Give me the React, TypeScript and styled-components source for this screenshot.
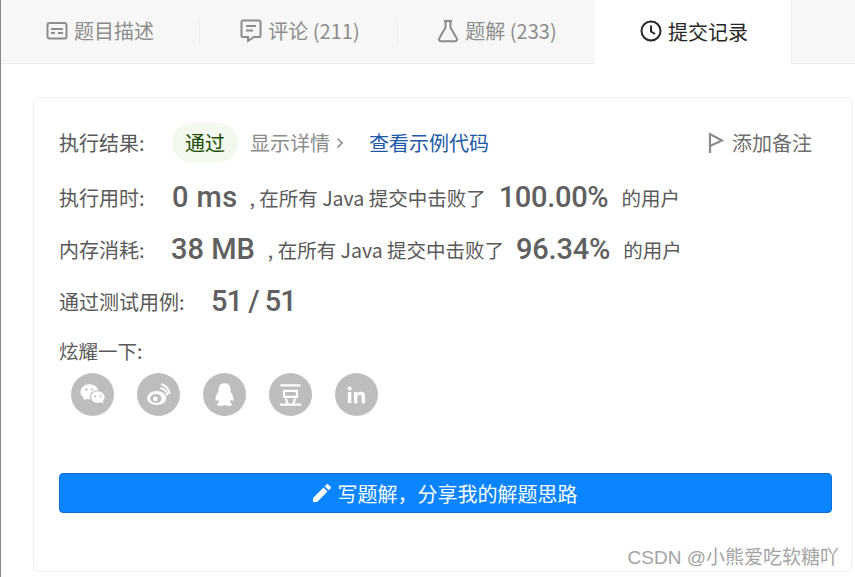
import React from "react"
import styled, { createGlobalStyle } from "styled-components"

const GlobalStyle = createGlobalStyle`
  html, body {
    margin: 0;
    padding: 0;
    background: #fff;
  }
  body {
    font-family: "Noto Sans CJK SC", "Noto Sans", sans-serif;
  }
`

const Page = styled.div`
  width: 855px;
  height: 577px;
  overflow: hidden;
  box-sizing: border-box;
  border-left: 1px solid #8a8a8a;
`

const TabBar = styled.div`
  display: flex;
  height: 64px;
  box-sizing: border-box;
  background: #f7f7f7;
  border-bottom: 1px solid #eeeeee;
`

const Tab = styled.div<{ $active?: boolean; $width: number; $divider?: boolean; $nudge?: number }>`
  position: relative;
  display: flex;
  align-items: center;
  justify-content: center;
  gap: 6px;
  width: ${(p) => p.$width}px;
  height: ${(p) => (p.$active ? 64 : 63)}px;
  padding-bottom: 2px;
  padding-left: ${(p) => Math.max(p.$nudge ?? 0, 0)}px;
  padding-right: ${(p) => Math.max(-(p.$nudge ?? 0), 0)}px;
  box-sizing: border-box;
  font-size: 20px;
  color: ${(p) => (p.$active ? "#262626" : "#8c8c8c")};
  background: ${(p) => (p.$active ? "#fff" : "transparent")};
  ${(p) => p.$active && "border-right: 1px solid #eeeeee;"}
  ${(p) =>
    p.$divider &&
    `&::after {
      content: "";
      position: absolute;
      right: 0;
      top: 19px;
      height: 25px;
      width: 1px;
      background: #eeeeee;
    }`}
`

const Card = styled.div`
  margin: 33px 3px 0 32px;
  height: 475px;
  box-sizing: border-box;
  padding: 25px 19px 0 25px;
  border: 1px solid #f0f0f0;
  border-radius: 6px;
`

const ResultRow = styled.div`
  display: flex;
  align-items: center;
  height: 39px;
  font-size: 20px;
  color: #595959;
`

const Label = styled.span<{ $width: number }>`
  width: ${(p) => p.$width}px;
  flex: none;
  font-size: 20px;
  color: #595959;
`

const PassBadge = styled.span`
  display: flex;
  align-items: center;
  justify-content: center;
  width: 66px;
  height: 39px;
  border-radius: 19px;
  background: #f4f9f0;
  color: #1d4d00;
`

const Details = styled.span`
  display: flex;
  align-items: center;
  gap: 6px;
  margin-left: 12px;
  color: #8c8c8c;
`

const SampleLink = styled.span`
  margin-left: 25px;
  color: #1f5aa8;
`

const Note = styled.span`
  display: flex;
  align-items: center;
  gap: 8px;
  margin-left: auto;
  margin-right: 20px;
  color: #6e6e6e;
`

const StatRow = styled.div<{ $top: number }>`
  display: flex;
  align-items: center;
  height: 40px;
  margin-top: ${(p) => p.$top}px;
  color: #595959;
`

const Big = styled.span<{ $left?: number; $right?: number; $tight?: number }>`
  font-family: "Roboto", "Noto Sans", sans-serif;
  font-size: 29px;
  font-weight: 500;
  color: #606060;
  letter-spacing: ${(p) => p.$tight ?? 0}px;
  margin-left: ${(p) => p.$left ?? 0}px;
  margin-right: ${(p) => p.$right ?? 0}px;
  white-space: pre;
`

const Small = styled.span`
  font-size: 19.5px;
  color: #595959;
  white-space: pre;
`

const ShareLabel = styled.div`
  margin-top: 17px;
  font-size: 19.5px;
  line-height: 26px;
  color: #595959;
`

const ShareIcons = styled.div`
  display: flex;
  gap: 23px;
  margin: 9px 0 0 12px;
`

const ShareIcon = styled.div`
  display: flex;
  align-items: center;
  justify-content: center;
  width: 43px;
  height: 43px;
  border-radius: 50%;
  background: #bdbdbd;
`

const WriteButton = styled.div`
  display: flex;
  align-items: center;
  justify-content: center;
  gap: 7px;
  height: 40px;
  margin-top: 57px;
  padding-right: 1px;
  box-sizing: border-box;
  border: 1px solid #0d6fd6;
  border-radius: 4px;
  background: #0a84ff;
  color: #fff;
  font-size: 20px;
`

const Watermark = styled.div`
  position: absolute;
  right: 16px;
  top: 545px;
  font-family: "Liberation Sans", "Noto Sans CJK SC", sans-serif;
  font-size: 19px;
  line-height: 26px;
  color: #a3a3a3;
  white-space: pre;
`

const DescIcon = () => (
  <svg width="22" height="20" viewBox="0 0 22 20" fill="none" stroke="#8c8c8c" strokeWidth="2">
    <rect x="1.5" y="2" width="19" height="15.5" rx="2" />
    <path d="M5 8h12M5 12h4M12 12h5" />
  </svg>
)

const CommentIcon = () => (
  <svg width="22" height="24" viewBox="0 0 22 24" fill="none" stroke="#8c8c8c" strokeWidth="2">
    <path d="M3 1.5h16a1.5 1.5 0 0 1 1.5 1.5v13.5a1.5 1.5 0 0 1-1.5 1.5h-5l-6 4v-4H3a1.5 1.5 0 0 1-1.5-1.5V3A1.5 1.5 0 0 1 3 1.5z" />
    <path d="M6 7h10M6 11.5h7" />
  </svg>
)

const FlaskIcon = () => (
  <svg width="22" height="24" viewBox="0 0 22 24" fill="none" stroke="#8c8c8c" strokeWidth="2">
    <path d="M7 2h8M8.5 2v6.5L2.2 19.5c-.7 1.3.1 2.7 1.6 2.7h14.4c1.5 0 2.3-1.4 1.6-2.7L13.5 8.5V2" />
  </svg>
)

const ClockIcon = () => (
  <svg width="22" height="22" viewBox="0 0 22 22" fill="none" stroke="#262626" strokeWidth="2">
    <circle cx="11" cy="11" r="9.5" />
    <path d="M11 5.5V11.5l4 2.5" />
  </svg>
)

const ChevronIcon = () => (
  <svg width="8" height="12" viewBox="0 0 8 12" fill="none" stroke="#8c8c8c" strokeWidth="1.6">
    <path d="M1.5 1.5 6 6l-4.5 4.5" />
  </svg>
)

const FlagIcon = () => (
  <svg width="16" height="22" viewBox="0 0 16 22" fill="none" stroke="#8c8c8c" strokeWidth="2.2">
    <path d="M2 21V2l12 6.5L2 14" />
  </svg>
)

const PencilIcon = () => (
  <svg width="18" height="18" viewBox="0 0 18 18" fill="#fff">
    <path d="M0 18v-4L10.5 3.5l4 4L4 18zM11.7 2.3 13.6.4a1.2 1.2 0 0 1 1.7 0l2.3 2.3a1.2 1.2 0 0 1 0 1.7l-1.9 1.9z" />
  </svg>
)

const WechatIcon = () => (
  <svg width="26" height="23" viewBox="0 0 30 26" fill="#fff">
    <ellipse cx="11" cy="10" rx="10.5" ry="8.8" />
    <path d="M5 15l-1 5 5-3z" />
    <ellipse cx="20.5" cy="16" rx="9.5" ry="8" fill="#bdbdbd" />
    <ellipse cx="20.5" cy="16" rx="8" ry="6.8" />
    <path d="M24 21l3 3-.5-5z" />
    <circle cx="7.5" cy="7.5" r="1.3" fill="#bdbdbd" />
    <circle cx="14" cy="7.5" r="1.3" fill="#bdbdbd" />
    <circle cx="17.5" cy="15" r="1.1" fill="#bdbdbd" />
    <circle cx="23.5" cy="15" r="1.1" fill="#bdbdbd" />
  </svg>
)

const WeiboIcon = () => (
  <svg width="25" height="23" viewBox="0 0 28 26">
    <ellipse cx="12" cy="17" rx="11" ry="8" fill="#fff" />
    <ellipse cx="11" cy="17.5" rx="6.5" ry="5" fill="#bdbdbd" />
    <circle cx="10.5" cy="18" r="2.6" fill="#fff" />
    <path d="M16 6a8 8 0 0 1 8 8M17 1.5a12 12 0 0 1 9.5 11" fill="none" stroke="#fff" strokeWidth="2.4" />
  </svg>
)

const QQIcon = () => (
  <svg width="21" height="25" viewBox="0 0 26 30" fill="#fff">
    <path d="M13 1c5.5 0 7.5 4 7.5 9 0 1.2.2 2 1.2 3.6 1.5 2.4 3 5.4 2.3 8.4-.4 1.5-1.4 1-2.5-.8-.5 1.6-1.2 2.8-2 3.6 2 .8 3 1.6 3 2.5 0 1-2 1.7-5 1.7-2 0-3.5-.4-4.5-1.2-1 .8-2.5 1.2-4.5 1.2-3 0-5-.7-5-1.7 0-.9 1-1.7 3-2.5-.8-.8-1.500-2-2-3.600C3.4 23 2.4 23.5 2 22c-.7-3 .8-6 2.300-8.400 1-1.600 1.200-2.400 1.200-3.600C5.500 5 7.500 1 13 1z" />
  </svg>
)

const DoubanIcon = () => (
  <svg width="23" height="24" viewBox="0 0 24 26" fill="none" stroke="#fff" strokeWidth="2.4">
    <path d="M1 2.5h22M5 8.5h14V15H5zM7 17l2 6M17 17l-2 6M.5 23.500h23" />
  </svg>
)

const LinkedinIcon = () => (
  <svg width="19" height="18" viewBox="0 0 22 20" fill="#fff">
    <rect x="1" y="6.5" width="4" height="13" />
    <circle cx="3" cy="2.6" r="2.4" />
    <path d="M8 6.5h3.8v1.9c.7-1.2 2.2-2.2 4.3-2.2 4 0 4.900 2.600 4.900 6v7.300h-4v-6.500c0-1.600-.1-3.400-2.100-3.400s-2.900 1.600-2.900 3.400v6.500H8z" />
  </svg>
)

const App = () => {
  return (
    <Page>
      <GlobalStyle />
      <TabBar>
        <Tab $width={199} $divider $nudge={-1}>
          <DescIcon />
          题目描述
        </Tab>
        <Tab $width={198} $divider $nudge={2}>
          <CommentIcon />
          评论 (211)
        </Tab>
        <Tab $width={197} $nudge={1}>
          <FlaskIcon />
          题解 (233)
        </Tab>
        <Tab $width={197} $active $nudge={2}>
          <ClockIcon />
          提交记录
        </Tab>
      </TabBar>
      <Card>
        <ResultRow>
          <Label $width={113}>执行结果:</Label>
          <PassBadge>通过</PassBadge>
          <Details>
            显示详情
            <ChevronIcon />
          </Details>
          <SampleLink>查看示例代码</SampleLink>
          <Note>
            <FlagIcon />
            添加备注
          </Note>
        </ResultRow>
        <StatRow $top={15}>
          <Label $width={113}>执行用时:</Label>
          <Big $right={12} $tight={0.4}>0 ms</Big>
          <Small>, 在所有 Java 提交中击败了</Small>
          <Big $left={13} $right={13} $tight={-0.3}>100.00%</Big>
          <Small>的用户</Small>
        </StatRow>
        <StatRow $top={12}>
          <Label $width={112}>内存消耗:</Label>
          <Big $right={13}>38 MB</Big>
          <Small>, 在所有 Java 提交中击败了</Small>
          <Big $left={12} $right={13} $tight={-0.2}>96.34%</Big>
          <Small>的用户</Small>
        </StatRow>
        <StatRow $top={12}>
          <Label $width={152}>通过测试用例:</Label>
          <Big $tight={-1}>51 / 51</Big>
        </StatRow>
        <ShareLabel>炫耀一下:</ShareLabel>
        <ShareIcons>
          <ShareIcon><WechatIcon /></ShareIcon>
          <ShareIcon><WeiboIcon /></ShareIcon>
          <ShareIcon><QQIcon /></ShareIcon>
          <ShareIcon><DoubanIcon /></ShareIcon>
          <ShareIcon><LinkedinIcon /></ShareIcon>
        </ShareIcons>
        <WriteButton>
          <PencilIcon />
          写题解，分享我的解题思路
        </WriteButton>
      </Card>
      <Watermark>CSDN @小熊爱吃软糖吖</Watermark>
    </Page>
  )
}

export default App
